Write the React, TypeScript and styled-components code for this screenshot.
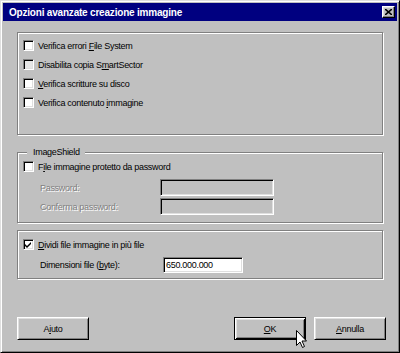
import React from "react";
import styled, { createGlobalStyle } from "styled-components";

const Global = createGlobalStyle`
  html, body { margin: 0; padding: 0; background: #c0c0c0; }
  * { box-sizing: border-box; }
`;

const Window = styled.div`
  position: relative;
  width: 400px;
  height: 353px;
  background: #c0c0c0;
  border: 1px solid;
  border-color: #dfdfdf #000 #000 #dfdfdf;
  box-shadow: inset 1px 1px 0 #fff, inset -1px -1px 0 #808080;
  padding: 2px;
  display: flex;
  flex-direction: column;
  font-family: "Liberation Sans", Arial, sans-serif;
  font-size: 9px;
  letter-spacing: -0.3px;
  color: #000;
`;

const TitleBar = styled.div`
  height: 18px;
  background: #000080;
  display: flex;
  align-items: center;
  justify-content: space-between;
  padding: 0 2px 0 6px;
`;

const TitleText = styled.span`
  color: #fff;
  font-weight: bold;
  font-size: 10px;
  letter-spacing: -0.2px;
`;

const CloseButton = styled.div`
  width: 13px;
  height: 12px;
  background: #c0c0c0;
  border: 1px solid;
  border-color: #fff #000 #000 #fff;
  box-shadow: inset -1px -1px 0 #808080, inset 1px 1px 0 #dfdfdf;
  display: flex;
  align-items: center;
  justify-content: center;
`;

const Content = styled.div`
  display: flex;
  flex-direction: column;
  padding: 11px 14px 0 14px;
`;

const Group = styled.div<{ $mt?: number; $pad: string }>`
  position: relative;
  margin-top: ${(p) => p.$mt ?? 0}px;
  border: 1px solid #808080;
  box-shadow: 1px 1px 0 #fff, inset 1px 1px 0 #fff;
  padding: ${(p) => p.$pad};
  display: flex;
  flex-direction: column;
`;

const Legend = styled.span`
  position: absolute;
  top: -7px;
  left: 9px;
  height: 13px;
  line-height: 13px;
  padding: 0 5px 0 6px;
  background: #c0c0c0;
`;

const CheckRow = styled.div<{ $h: number }>`
  height: ${(p) => p.$h}px;
  display: flex;
  align-items: center;
  gap: 4px;
`;

const Box = styled.span<{ $dim?: boolean }>`
  width: 11px;
  height: 11px;
  flex: none;
  background: ${(p) => (p.$dim ? "#e6e6e6" : "#fff")};
  border: 1px solid;
  border-color: #808080 #fff #fff #808080;
  box-shadow: inset 1px 1px 0 #000, inset -1px -1px 0 #dfdfdf;
  display: flex;
  align-items: center;
  justify-content: center;
`;

const Key = styled.span`
  text-decoration: underline;
  text-underline-offset: 1px;
`;

const FieldGrid = styled.div<{ $label: number; $input: number; $mt: number; $gap?: number }>`
  display: grid;
  grid-template-columns: ${(p) => p.$label}px ${(p) => p.$input}px;
  row-gap: ${(p) => p.$gap ?? 0}px;
  margin-top: ${(p) => p.$mt}px;
  margin-left: 17px;
  align-items: center;
`;

const Label = styled.span<{ $disabled?: boolean }>`
  color: ${(p) => (p.$disabled ? "#808080" : "#000")};
  text-shadow: ${(p) => (p.$disabled ? "1px 1px 0 #fff" : "none")};
`;

const TextInput = styled.div<{ $h: number; $white?: boolean }>`
  height: ${(p) => p.$h}px;
  background: ${(p) => (p.$white ? "#fff" : "#c0c0c0")};
  border: 1px solid;
  border-color: #808080 #fff #fff #808080;
  box-shadow: inset 1px 1px 0 #000, inset -1px -1px 0 #dfdfdf;
  padding: 0 2px;
  display: flex;
  align-items: center;
`;

const ButtonRow = styled.div`
  display: flex;
  align-items: center;
  margin-top: 38px;
  margin-right: -3px;
  gap: 8px;
`;

const Spacer = styled.div`
  flex: 1;
`;

const Button = styled.div<{ $default?: boolean }>`
  width: 72px;
  height: 23px;
  display: flex;
  align-items: center;
  justify-content: center;
  background: #c0c0c0;
  border: 1px solid;
  border-color: ${(p) => (p.$default ? "#000" : "#fff #000 #000 #fff")};
  box-shadow: ${(p) =>
    p.$default
      ? "inset 1px 1px 0 #fff, inset -1px -1px 0 #000, inset 2px 2px 0 #dfdfdf, inset -2px -2px 0 #808080"
      : "inset 1px 1px 0 #dfdfdf, inset -1px -1px 0 #808080"};
`;

const Cursor = styled.svg`
  position: absolute;
  left: 295px;
  top: 329px;
`;

const Check = () => (
  <svg width="7" height="7" viewBox="0 0 7 7">
    <path d="M0 3 L2 5 L6 1 L6 3 L2 7 L0 5 Z" fill="#000" />
  </svg>
);

export default function App() {
  return (
    <>
      <Global />
      <Window>
        <TitleBar>
          <TitleText>Opzioni avanzate creazione immagine</TitleText>
          <CloseButton>
            <svg width="7" height="6" viewBox="0 0 7 6">
              <path d="M0 0 L7 6 M7 0 L0 6" stroke="#000" strokeWidth="1.6" />
            </svg>
          </CloseButton>
        </TitleBar>
        <Content>
          <Group $pad="3px 5px 22px 5px">
            <CheckRow $h={19}>
              <Box />
              <span>
                Verifica errori <Key>F</Key>ile System
              </span>
            </CheckRow>
            <CheckRow $h={19}>
              <Box $dim />
              <span>
                Disabilita copia S<Key>m</Key>artSector
              </span>
            </CheckRow>
            <CheckRow $h={19}>
              <Box />
              <span>
                <Key>V</Key>erifica scritture su disco
              </span>
            </CheckRow>
            <CheckRow $h={19}>
              <Box />
              <span>
                Verifica contenuto <Key>i</Key>mmagine
              </span>
            </CheckRow>
          </Group>

          <Group $mt={17} $pad="7px 5px 7px 5px">
            <Legend>ImageShield</Legend>
            <CheckRow $h={13}>
              <Box />
              <span>
                F<Key>i</Key>le immagine protetto da password
              </span>
            </CheckRow>
            <FieldGrid $label={120} $input={114} $mt={6} $gap={2}>
              <Label $disabled>Password:</Label>
              <TextInput $h={17} />
              <Label $disabled>Conferma password:</Label>
              <TextInput $h={17} />
            </FieldGrid>
          </Group>

          <Group $mt={7} $pad="7px 5px 5px 5px">
            <CheckRow $h={13}>
              <Box>
                <Check />
              </Box>
              <span>
                <Key>D</Key>ividi file immagine in più file
              </span>
            </CheckRow>
            <FieldGrid $label={123} $input={80} $mt={6}>
              <Label>
                Dimensioni file (<Key>b</Key>yte):
              </Label>
              <TextInput $h={16} $white>
                650.000.000
              </TextInput>
            </FieldGrid>
          </Group>

          <ButtonRow>
            <Button>
              <span>
                A<Key>i</Key>uto
              </span>
            </Button>
            <Spacer />
            <Button $default>
              <span>
                <Key>O</Key>K
              </span>
            </Button>
            <Button>
              <span>
                <Key>A</Key>nnulla
              </span>
            </Button>
          </ButtonRow>
        </Content>
        <Cursor width="12" height="19" viewBox="0 0 12 19">
          <path
            d="M0.5 0.5 L0.5 15.5 L4 12 L6.5 17.5 L8.5 16.5 L6 11 L10.5 11 Z"
            fill="#fff"
            stroke="#000"
            strokeWidth="1"
          />
        </Cursor>
      </Window>
    </>
  );
}
